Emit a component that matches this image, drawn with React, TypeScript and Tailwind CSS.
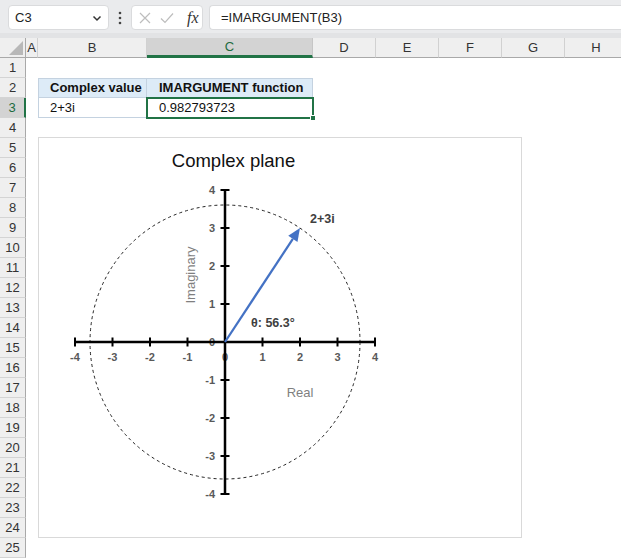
import React from 'react'

const columns = [
  { label: 'A', width: 'w-[12px]' },
  { label: 'B', width: 'w-[109px]' },
  { label: 'C', width: 'w-[166px]' },
  { label: 'D', width: 'w-[63px]' },
  { label: 'E', width: 'w-[63px]' },
  { label: 'F', width: 'w-[63px]' },
  { label: 'G', width: 'w-[63px]' },
  { label: 'H', width: 'w-[63px]' },
]

const rows = Array.from({ length: 25 }, (_, i) => i + 1)

const OX = 225
const OY = 342
const UX = 37.5
const UY = 38
const ticks = [-4, -3, -2, -1, 0, 1, 2, 3, 4]

function FormulaBar() {
  return (
    <div className="h-[33px] bg-[#eaebed] flex items-center pt-[2px]">
      <div className="ml-[8px] w-[101px] h-[25px] bg-white rounded-[4px] border border-[#dadbdd] flex items-center justify-between pl-[6px] pr-[6px]">
        <span className="text-[13px] text-[#222]">C3</span>
        <svg width="10" height="8" viewBox="0 0 10 8">
          <path d="M1.5 2.5 L5 6 L8.5 2.5" fill="none" stroke="#333" strokeWidth="1.5" />
        </svg>
      </div>
      <div className="w-[22px] flex justify-center">
        <svg width="4" height="14" viewBox="0 0 4 14">
          <circle cx="2" cy="2" r="1.3" fill="#444" />
          <circle cx="2" cy="7" r="1.3" fill="#444" />
          <circle cx="2" cy="12" r="1.3" fill="#444" />
        </svg>
      </div>
      <div className="w-[72px] h-[25px] bg-white rounded-[4px] border border-[#dadbdd] flex items-center pl-[7px] gap-[9px]">
        <svg width="12" height="12" viewBox="0 0 12 12">
          <path d="M1 1 L11 11 M11 1 L1 11" stroke="#bdbdbd" strokeWidth="1.2" />
        </svg>
        <svg width="14" height="12" viewBox="0 0 14 12">
          <path d="M1 6.5 L5 10.5 L13 1.5" fill="none" stroke="#bdbdbd" strokeWidth="1.2" />
        </svg>
        <span className="ml-[4px] text-[16px] italic text-[#333] font-['Liberation_Serif',serif] leading-none">fx</span>
      </div>
      <div className="ml-[6px] flex-1 h-[25px] bg-white rounded-l-[4px] border border-r-0 border-[#dadbdd] flex items-center pl-[11px]">
        <span className="text-[13px] text-[#222]">=IMARGUMENT(B3)</span>
      </div>
    </div>
  )
}

function ColumnHeaders() {
  return (
    <div className="flex h-[20px]">
      <div className="w-[26px] shrink-0 h-[20px] bg-[#efefef] border-r border-b border-[#a9a9a9] flex items-end justify-end p-[2px]">
        <svg width="14" height="14" viewBox="0 0 14 14">
          <path d="M14 0 L14 14 L0 14 Z" fill="#b8b8b8" />
        </svg>
      </div>
      {columns.map((c) => {
        const selected = c.label === 'C'
        return (
          <div
            key={c.label}
            className={`${c.width} shrink-0 h-[20px] flex items-center justify-center text-[13px] border-r ${
              selected
                ? 'bg-[#d3d3d3] border-b-[3px] border-b-[#217346] border-r-[#c6c6c6] text-[#1d6b3f]'
                : 'bg-[#efefef] border-b border-b-[#a9a9a9] border-r-[#d1d1d1] text-[#333]'
            }`}
          >
            {c.label}
          </div>
        )
      })}
    </div>
  )
}

function Row({ n }: { n: number }) {
  const selected = n === 3
  return (
    <div className="flex h-[20px]">
      <div
        className={`w-[26px] shrink-0 h-[20px] flex items-center justify-center text-[13px] border-b border-b-[#d4d4d4] ${
          selected
            ? 'bg-[#d3d3d3] border-r-[2px] border-r-[#217346] text-[#1d6b3f]'
            : 'bg-[#efefef] border-r border-r-[#a9a9a9] text-[#333]'
        }`}
      >
        {n}
      </div>
      <div className="w-[12px] shrink-0" />
      {n === 2 && (
        <>
          <div className="w-[109px] shrink-0 h-[20px] bg-[#ddebf7] border border-[#c4d2e0] flex items-center pl-[11px] text-[13px] font-bold text-[#111]">
            Complex value
          </div>
          <div className="w-[166px] shrink-0 h-[20px] bg-[#ddebf7] border border-l-0 border-[#c4d2e0] flex items-center pl-[12px] text-[13px] font-bold text-[#111]">
            IMARGUMENT function
          </div>
        </>
      )}
      {n === 3 && (
        <>
          <div className="w-[109px] shrink-0 h-[20px] border-l border-b border-r border-[#c4d2e0] flex items-center pl-[11px] text-[13px] text-[#111]">
            2+3i
          </div>
          <div className="relative w-[166px] shrink-0 h-[20px] flex items-center pl-[12px] text-[13px] text-[#111]">
            0.982793723
            <div className="absolute -top-[1px] -left-[1px] -right-[1px] -bottom-[1px] border-2 border-[#217346]" />
            <div className="absolute -right-[3px] -bottom-[3px] w-[6px] h-[6px] bg-[#217346] border border-white" />
          </div>
        </>
      )}
    </div>
  )
}

function Chart() {
  const dx = 300 - OX
  const dy = 228 - OY
  const len = Math.hypot(dx, dy)
  const ux = dx / len
  const uy = dy / len
  const bx = 300 - ux * 13
  const by = 228 - uy * 13
  const px = -uy * 5.5
  const py = ux * 5.5
  const head = `300,228 ${bx + px},${by + py} ${bx - px},${by - py}`

  return (
    <div className="absolute left-[38px] top-[137px] w-[484px] h-[401px] border border-[#d9d9d9] bg-white">
      <svg width="482" height="399" viewBox="39 138 482 399" className="block">
        <text x="233.5" y="167" textAnchor="middle" fontSize="18.5" fill="#111" fontFamily="Liberation Sans, sans-serif">
          Complex plane
        </text>
        <ellipse cx={OX} cy={OY} rx="135" ry="137" fill="none" stroke="#222" strokeWidth="1" strokeDasharray="3 3" />
        {ticks.map((t) => (
          <text key={'x' + t} x={OX + t * UX} y="361" textAnchor="middle" fontSize="11" fontWeight="bold" fill="#595959" fontFamily="Liberation Sans, sans-serif">
            {t}
          </text>
        ))}
        {ticks.map((t) => (
          <text key={'y' + t} x="215" y={OY - t * UY + 4} textAnchor="end" fontSize="11" fontWeight="bold" fill="#595959" fontFamily="Liberation Sans, sans-serif">
            {t}
          </text>
        ))}
        <line x1="75" y1={OY} x2="376" y2={OY} stroke="#000" strokeWidth="2.5" />
        <line x1={OX} y1="190" x2={OX} y2="495" stroke="#000" strokeWidth="2.5" />
        {ticks.map((t) => (
          <line key={'tx' + t} x1={OX + t * UX} y1={OY - 4.5} x2={OX + t * UX} y2={OY + 4.5} stroke="#000" strokeWidth="2" />
        ))}
        {ticks.map((t) => (
          <line key={'ty' + t} x1={OX - 4.5} y1={OY - t * UY} x2={OX + 4.5} y2={OY - t * UY} stroke="#000" strokeWidth="2" />
        ))}
        <line x1={OX} y1={OY} x2={bx} y2={by} stroke="#4472c4" strokeWidth="2.25" />
        <polygon points={head} fill="#4472c4" />
        <text x="310" y="222.5" fontSize="12.5" fontWeight="bold" fill="#404040" fontFamily="Liberation Sans, sans-serif">
          2+3i
        </text>
        <text x="251" y="327" fontSize="12.5" fontWeight="bold" fill="#404040" fontFamily="Liberation Sans, sans-serif">
          θ: 56.3°
        </text>
        <text
          x="0"
          y="0"
          transform="translate(195 275) rotate(-90)"
          textAnchor="middle"
          fontSize="13"
          fill="#7f7f7f"
          fontFamily="Liberation Sans, sans-serif"
        >
          Imaginary
        </text>
        <text x="300" y="396.5" textAnchor="middle" fontSize="13" fill="#7f7f7f" fontFamily="Liberation Sans, sans-serif">
          Real
        </text>
      </svg>
    </div>
  )
}

export default function App() {
  return (
    <div className="relative w-[621px] h-[559px] overflow-hidden bg-white font-['Liberation_Sans',sans-serif]">
      <FormulaBar />
      <div className="h-[5px] bg-[#e2e3e5]" />
      <ColumnHeaders />
      {rows.map((n) => (
        <Row key={n} n={n} />
      ))}
      <Chart />
    </div>
  )
}
